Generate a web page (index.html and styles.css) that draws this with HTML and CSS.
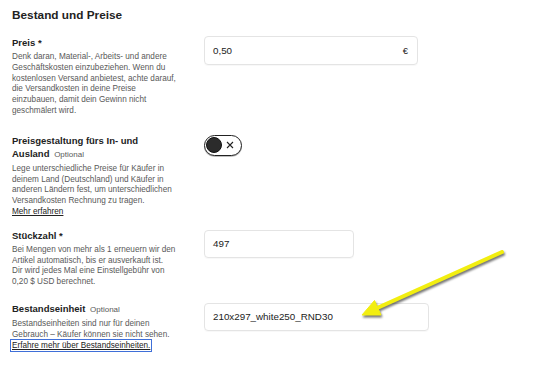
FILE: index.html
```html
<!DOCTYPE html>
<html lang="de">
<head>
    <meta charset="UTF-8">
    <meta name="viewport" content="width=device-width, initial-scale=1.0">
    <title>Bestand und Preise</title>
    <link rel="stylesheet" href="styles.css">
</head>
<body>

    <main class="panel">
        <h2 class="panel-title">Bestand und Preise</h2>

        <div class="field field-price">
            <div class="field-info">
                <div class="field-label">Preis *</div>
                <p class="field-help">Denk daran, Material-, Arbeits- und andere<br>Geschäftskosten einzubeziehen. Wenn du<br>kostenlosen Versand anbietest, achte darauf,<br>die Versandkosten in deine Preise<br>einzubauen, damit dein Gewinn nicht<br>geschmälert wird.</p>
            </div>
            <div class="field-control">
                <div class="text-input input-price">
                    <span>0,50</span>
                    <span class="unit">€</span>
                </div>
            </div>
        </div>

        <div class="field field-intl">
            <div class="field-info">
                <div class="field-label">Preisgestaltung fürs In- und<br>Ausland <span class="optional">Optional</span></div>
                <p class="field-help">Lege unterschiedliche Preise für Käufer in<br>deinem Land (Deutschland) und Käufer in<br>anderen Ländern fest, um unterschiedlichen<br>Versandkosten Rechnung zu tragen.<br><a href="#" class="help-link">Mehr erfahren</a></p>
            </div>
            <div class="field-control">
                <button class="toggle" type="button">
                    <span class="toggle-knob"></span>
                    <svg class="toggle-x" width="8" height="8" viewBox="0 0 8 8">
                        <path d="M1 1 L7 7 M7 1 L1 7" stroke="#222" stroke-width="1.1" fill="none"/>
                    </svg>
                </button>
            </div>
        </div>

        <div class="field field-qty">
            <div class="field-info">
                <div class="field-label">Stückzahl *</div>
                <p class="field-help">Bei Mengen von mehr als 1 erneuern wir den<br>Artikel automatisch, bis er ausverkauft ist.<br>Dir wird jedes Mal eine Einstellgebühr von<br>0,20 $ USD berechnet.</p>
            </div>
            <div class="field-control">
                <div class="text-input input-qty">
                    <span>497</span>
                </div>
            </div>
        </div>

        <div class="field field-sku">
            <div class="field-info">
                <div class="field-label">Bestandseinheit <span class="optional">Optional</span></div>
                <p class="field-help">Bestandseinheiten sind nur für deinen<br>Gebrauch – Käufer können sie nicht sehen.<br><a href="#" class="help-link focused">Erfahre mehr über Bestandseinheiten.</a></p>
            </div>
            <div class="field-control">
                <div class="text-input input-sku">
                    <span>210x297_white250_RND30</span>
                </div>
            </div>
        </div>

        <!-- Pfeil aus dem Screenshot -->
        <svg class="arrow" width="542" height="369" viewBox="0 0 542 369">
            <g fill="#f2ee10" stroke="#f2ee10">
                <line x1="502" y1="252" x2="376" y2="308.5" stroke-width="4" stroke-linecap="round"/>
                <polygon points="362,315 374.5,300.5 381,315" stroke-width="1" stroke-linejoin="round"/>
            </g>
        </svg>
    </main>

</body>
</html>
```

FILE: styles.css
```css
body, html {
    margin: 0;
    padding: 0;
    background: #fff;
}
.panel {
    position: relative;
    width: 542px;
    height: 369px;
    padding: 8px 0 0 12px;
    box-sizing: border-box;
    font-family: "Liberation Sans", Arial, sans-serif;
    color: #222;
    overflow: hidden;
}
.panel-title {
    margin: 0 0 14px;
    font-size: 11.8px;
    line-height: 14px;
    font-weight: 700;
}

/* Filas del formulario */
.field {
    display: grid;
    grid-template-columns: 180px auto;
    column-gap: 12px;
    align-items: start;
    margin-bottom: 14px;
}
.field-price { margin-bottom: 17px; }
.field-intl { margin-bottom: 11px; }
.field-control { padding-top: 1px; }
.field-price .field-control { padding-top: 0; }
.field-label {
    font-size: 9.5px;
    line-height: 13px;
    font-weight: 700;
}
.optional {
    font-size: 8px;
    font-weight: 400;
    color: #595959;
    margin-left: 2px;
}
.field-help {
    margin: 3px 0 0;
    font-size: 8.2px;
    line-height: 10.8px;
    color: #595959;
}
.help-link {
    color: #222;
    text-decoration: underline;
}
.help-link.focused {
    outline: 1px solid #3f6fd8;
    outline-offset: 1px;
}

/* Campos de texto */
.text-input {
    height: 29px;
    box-sizing: border-box;
    border: 1px solid #e4e4e4;
    border-radius: 4px;
    box-shadow: 0 1px 1px rgba(0, 0, 0, 0.03);
    display: flex;
    align-items: center;
    justify-content: space-between;
    padding: 0 9px 0 8px;
    font-size: 9.8px;
    color: #222;
}
.input-price { width: 214px; }
.input-qty { width: 150px; height: 28px; }
.input-sku { width: 225px; height: 28px; }
.unit { font-size: 9.5px; }

/* Interruptor */
.toggle {
    width: 38px;
    height: 21px;
    box-sizing: border-box;
    border: 1.5px solid #222;
    border-radius: 11px;
    background: #fff;
    padding: 0 0 0 1px;
    display: flex;
    align-items: center;
    gap: 4px;
    box-shadow: 0 1px 0 rgba(0, 0, 0, 0.25);
    cursor: pointer;
}
.toggle-knob {
    width: 16px;
    height: 16px;
    border-radius: 50%;
    background: #2b2b2b;
    border: 1px solid #111;
    box-sizing: border-box;
}

.arrow {
    position: absolute;
    top: 0;
    left: 0;
    pointer-events: none;
    filter: drop-shadow(1px 2px 1.2px rgba(0, 0, 0, 0.55));
}
```
